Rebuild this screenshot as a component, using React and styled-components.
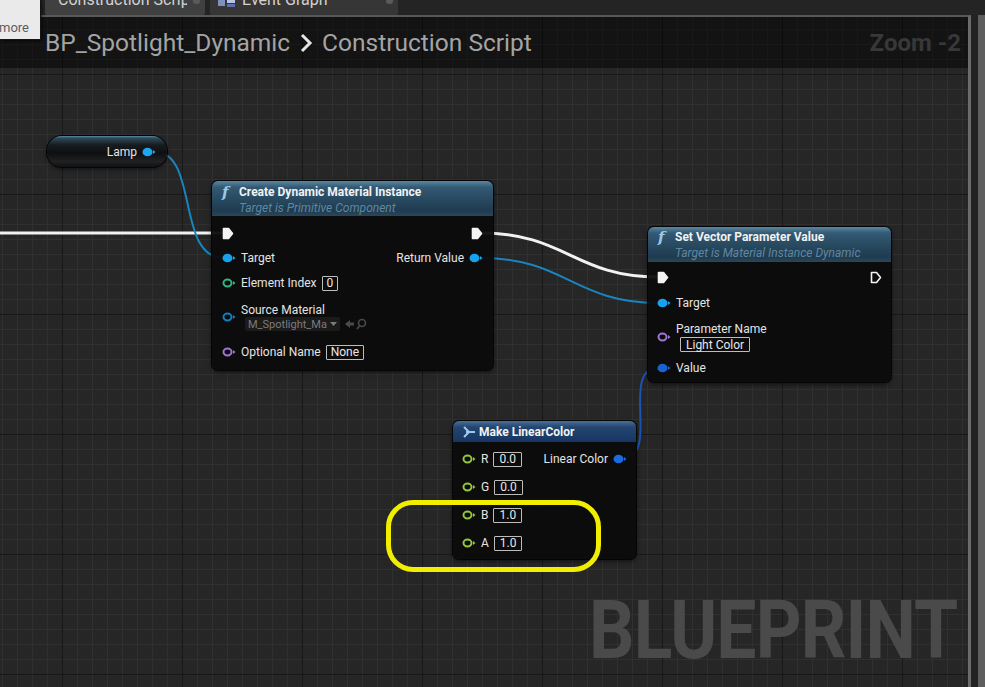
import styled, { createGlobalStyle } from 'styled-components'

// canvas starts below the tab strip and the panel border
const OY = 17

const GlobalStyle = createGlobalStyle`
  html, body { margin: 0; padding: 0; background: #1e1e1e; }
  body { font-family: Roboto, "Liberation Sans", sans-serif; }
`

const Screen = styled.div`
  position: relative;
  width: 985px;
  height: 687px;
  display: flex;
  flex-direction: column;
  overflow: hidden;
  background: #232323;
`
const TabBar = styled.div`
  height: 15px;
  flex-shrink: 0;
  display: flex;
  gap: 5px;
  padding-left: 45px;
  background: #242424;
`
const Tab = styled.div`
  width: ${p => p.$w}px;
  box-sizing: border-box;
  display: flex;
  align-items: flex-start;
  gap: 6px;
  padding-left: ${p => p.$pl}px;
  overflow: hidden;
  background: ${p => (p.$active ? '#404040' : '#363636')};
  border-radius: 0 0 2px 2px;
`
const TabLabel = styled.span`
  flex: 1;
  min-width: 0;
  overflow: hidden;
  margin-top: -8px;
  font-size: 16px;
  line-height: 16px;
  color: #d2d2d2;
  white-space: nowrap;
`
const TabClose = styled.span`
  width: 7px;
  height: 4px;
  margin-right: 5px;
  border-radius: 0 0 3px 3px;
  background: #5a5a5a;
`
const Popup = styled.div`
  position: absolute;
  left: 0;
  top: 0;
  z-index: 5;
  width: 41px;
  height: 40px;
  box-sizing: border-box;
  display: flex;
  align-items: center;
  justify-content: flex-end;
  padding: 16px 11px 0 0;
  background: #eaeaea;
  border-right: 1px solid #151515;
  border-bottom: 1px solid #151515;
  box-shadow: 1px 1px 3px rgba(0, 0, 0, 0.6);
  font-size: 13px;
  color: #5e5e5e;
`
const Body = styled.div`
  flex: 1;
  display: flex;
`
const GraphPanel = styled.div`
  width: 971px;
  box-sizing: border-box;
  display: flex;
  flex-direction: column;
  border-top: 2px solid #585858;
  border-right: 3px solid #6b6b6b;
`
const SideStrip = styled.div`
  flex: 1;
  background: linear-gradient(90deg, #222 0 7px, #5e5e5e 7px);
`
const Canvas = styled.div`
  position: relative;
  flex: 1;
  overflow: hidden;
  background-color: #262626;
  background-image:
    linear-gradient(90deg, #181818 1px, transparent 1px),
    linear-gradient(180deg, #181818 1px, transparent 1px),
    linear-gradient(90deg, #303030 1px, transparent 1px),
    linear-gradient(180deg, #303030 1px, transparent 1px);
  background-size: 120px 120px, 120px 120px, 15px 15px, 15px 15px;
  background-position: 62px 57px, 62px 57px, 2px 12px, 2px 12px;
`
const GraphHeader = styled.div`
  position: absolute;
  left: 0;
  top: 0;
  right: 0;
  height: 51px;
  z-index: 3;
  display: flex;
  align-items: center;
  justify-content: space-between;
  padding: 0 7px 0 45px;
  background: rgba(0, 0, 0, 0.5);
`
const Crumbs = styled.div`
  display: flex;
  align-items: center;
  gap: 9px;
  font-size: 24.5px;
  color: #a4a4a4;
`
const ZoomLabel = styled.div`
  font-size: 24px;
  font-weight: 700;
  color: #383838;
`
const Watermark = styled.div`
  position: absolute;
  left: 589px;
  top: 572px;
  font-size: 82px;
  line-height: 82px;
  font-weight: 700;
  color: #4a4a4a;
  transform: scaleX(0.87);
  transform-origin: left top;
  letter-spacing: -1px;
`
const Wires = styled.svg`
  position: absolute;
  left: 0;
  top: 0;
  z-index: 1;
`
const Highlight = styled.div`
  position: absolute;
  z-index: 4;
  left: 386px;
  top: ${500 - OY}px;
  width: 215px;
  height: 72px;
  box-sizing: border-box;
  border: 5px solid #f2ee00;
  border-radius: 27px;
`
const Node = styled.div`
  position: absolute;
  z-index: 2;
  left: ${p => p.$x}px;
  top: ${p => p.$y - OY}px;
  width: ${p => p.$w}px;
  height: ${p => p.$h}px;
  display: flex;
  flex-direction: column;
  overflow: hidden;
  border-radius: 6px;
  background: rgba(11, 11, 11, 0.95);
  box-shadow: 0 0 0 1px #050505, 0 2px 5px rgba(0, 0, 0, 0.6);
`
const NodeHeader = styled.div`
  height: ${p => p.$h}px;
  flex-shrink: 0;
  box-sizing: border-box;
  display: flex;
  align-items: flex-start;
  gap: ${p => (p.$kind === 'pure' ? 3 : 5)}px;
  padding: ${p => p.$pt}px 0 0 10px;
  background: ${p =>
    p.$kind === 'pure'
      ? 'linear-gradient(180deg, #4a6f98 0%, #23456f 30%, #173563 100%)'
      : 'linear-gradient(180deg, #5a87a3 0%, #335973 18%, #27485f 55%, #1f3b50 85%, #2a4658 100%)'};
`
const HeaderText = styled.div`
  display: flex;
  flex-direction: column;
`
const Title = styled.span`
  font-size: 12px;
  line-height: 16px;
  font-weight: 700;
  color: #f2f2f2;
  white-space: nowrap;
`
const Subtitle = styled.span`
  font-size: 12px;
  line-height: 16px;
  font-style: italic;
  color: #5f87a0;
  white-space: nowrap;
`
const FuncIcon = styled.span`
  width: 12px;
  font-family: "DejaVu Serif", serif;
  font-style: italic;
  font-weight: 700;
  font-size: 15px;
  line-height: 16px;
  color: #9cc8ea;
`
const NodeBody = styled.div`
  flex: 1;
  display: flex;
  flex-direction: column;
  padding: ${p => p.$pad};
`
const PinRow = styled.div`
  height: ${p => p.$h}px;
  display: flex;
  align-items: center;
  justify-content: space-between;
`
const PinSide = styled.div`
  display: flex;
  align-items: center;
  gap: 5px;
`
const PinLabel = styled.span`
  font-size: 12px;
  line-height: 14px;
  color: #e4e4e4;
  white-space: nowrap;
`
const Stack = styled.div`
  display: flex;
  flex-direction: column;
  gap: ${p => p.$gap || 0}px;
  align-items: flex-start;
`
const ValueBox = styled.span`
  display: inline-flex;
  align-items: center;
  height: 15px;
  box-sizing: border-box;
  padding: 0 ${p => p.$px || 5}px;
  border: 1px solid #bdbdbd;
  border-radius: 1px;
  font-size: 12px;
  color: #e8e8e8;
  margin-left: ${p => p.$ml || 0}px;
`
const AssetPicker = styled.div`
  display: flex;
  align-items: center;
  gap: 4px;
  padding-left: 4px;
`
const AssetCombo = styled.span`
  display: inline-flex;
  align-items: center;
  gap: 3px;
  height: 14px;
  padding: 0 3px;
  background: #1b1b1b;
  border-radius: 2px;
  font-size: 11px;
  color: #7c7c7c;
`
const VarNode = styled.div`
  position: absolute;
  z-index: 2;
  left: 47px;
  top: ${136 - OY}px;
  width: 120px;
  height: 31px;
  box-sizing: border-box;
  display: flex;
  align-items: center;
  justify-content: flex-end;
  gap: 5px;
  padding-right: 11px;
  border-radius: 15px;
  background: linear-gradient(180deg, #5c8ea6 0px, #2e4b5a 2px, #171c1f 9px, #0e0f10 55%, #1f2123 82%, #101112 100%);
  box-shadow: 0 0 0 1px #050505, 0 2px 4px rgba(0, 0, 0, 0.6);
`

function ExecPin({ filled }) {
  return (
    <svg width="12" height="13" viewBox="0 0 12 13">
      <path
        d="M1.5 1.5 H6.5 L10.5 6.5 L6.5 11.5 H1.5 Z"
        fill={filled ? '#f4f4f4' : 'none'}
        stroke="#f4f4f4"
        strokeWidth="1.6"
        strokeLinejoin="round"
      />
    </svg>
  )
}

function DataPin({ color, filled }) {
  return (
    <svg width="14" height="10" viewBox="0 0 14 10">
      <ellipse
        cx="5.5"
        cy="5"
        rx={filled ? 5 : 4}
        ry={filled ? 4.3 : 3.4}
        fill={filled ? color : 'none'}
        stroke={color}
        strokeWidth={filled ? 0 : 2}
      />
      <path d="M11 3 L13.5 5 L11 7 Z" fill={color} />
    </svg>
  )
}

function Chevron() {
  return (
    <svg width="14" height="22" viewBox="0 0 14 22">
      <path d="M3 3 L11 11 L3 19" fill="none" stroke="#e6e6e6" strokeWidth="3" />
    </svg>
  )
}

function MakeIcon() {
  return (
    <svg width="13" height="16" viewBox="0 0 13 16">
      <path d="M1 3 L6 8 M1 13 L6 8 M3 8 H12" fill="none" stroke="#9cc8f0" strokeWidth="2" />
    </svg>
  )
}

function GraphIcon() {
  return (
    <svg width="18" height="8" viewBox="0 0 18 8">
      <rect x="0" y="0" width="7" height="6" fill="#7f8fc0" />
      <rect x="9" y="0" width="8" height="3" fill="#b9c3e6" />
      <rect x="9" y="4" width="8" height="3" fill="#5f6fa8" />
    </svg>
  )
}

function PickerIcons() {
  return (
    <svg width="26" height="12" viewBox="0 0 26 12">
      <path d="M1 6 L6 2 V4.5 H10 V7.5 H6 V10 Z" fill="#4a4a4a" />
      <circle cx="18" cy="5" r="3.5" fill="none" stroke="#4a4a4a" strokeWidth="1.6" />
      <path d="M15.5 8 L13 11" stroke="#4a4a4a" strokeWidth="1.8" />
    </svg>
  )
}

const y = v => v - OY

export default function App() {
  return (
    <>
      <GlobalStyle />
      <Screen>
        <Popup>more</Popup>
        <TabBar>
          <Tab $w={160} $pl={13} $active>
            <TabLabel>Construction Script</TabLabel>
            <TabClose />
          </Tab>
          <Tab $w={188} $pl={8}>
            <GraphIcon />
            <TabLabel>Event Graph</TabLabel>
            <TabClose />
          </Tab>
        </TabBar>
        <Body>
          <GraphPanel>
            <Canvas>
              <GraphHeader>
                <Crumbs>
                  <span>BP_Spotlight_Dynamic</span>
                  <Chevron />
                  <span>Construction Script</span>
                </Crumbs>
                <ZoomLabel>Zoom -2</ZoomLabel>
              </GraphHeader>

              <Watermark>BLUEPRINT</Watermark>

              <Wires width="968" height="670">
                <path d={`M0 ${y(233)} H224`} stroke="#f2f2f2" strokeWidth="3" fill="none" />
                <path
                  d={`M153 ${y(151)} C200 ${y(151)}, 175 ${y(258)}, 224 ${y(258)}`}
                  stroke="#1a84bf"
                  strokeWidth="2"
                  fill="none"
                />
                <path
                  d={`M481 ${y(233)} C565 ${y(233)}, 575 ${y(277)}, 658 ${y(277)}`}
                  stroke="#f2f2f2"
                  strokeWidth="3"
                  fill="none"
                />
                <path
                  d={`M481 ${y(258)} C565 ${y(258)}, 575 ${y(303)}, 658 ${y(303)}`}
                  stroke="#1a84bf"
                  strokeWidth="2"
                  fill="none"
                />
                <path
                  d={`M624 ${y(457)} C660 ${y(457)}, 620 ${y(368)}, 658 ${y(368)}`}
                  stroke="#1a55b5"
                  strokeWidth="2"
                  fill="none"
                />
              </Wires>

              <VarNode>
                <PinLabel>Lamp</PinLabel>
                <DataPin color="#1ea6f2" filled />
              </VarNode>

              <Node $x={212} $y={181} $w={281} $h={189}>
                <NodeHeader $h={35} $pt={3}>
                  <FuncIcon>f</FuncIcon>
                  <HeaderText>
                    <Title>Create Dynamic Material Instance</Title>
                    <Subtitle>Target is Primitive Component</Subtitle>
                  </HeaderText>
                </NodeHeader>
                <NodeBody $pad="5px 10px 5px 10px">
                  <PinRow $h={24}>
                    <ExecPin filled />
                    <ExecPin filled />
                  </PinRow>
                  <PinRow $h={26}>
                    <PinSide>
                      <DataPin color="#18a2ee" filled />
                      <PinLabel>Target</PinLabel>
                    </PinSide>
                    <PinSide>
                      <PinLabel>Return Value</PinLabel>
                      <DataPin color="#18a2ee" filled />
                    </PinSide>
                  </PinRow>
                  <PinRow $h={24}>
                    <PinSide>
                      <DataPin color="#2fb784" />
                      <PinLabel>Element Index</PinLabel>
                      <ValueBox $px={4}>0</ValueBox>
                    </PinSide>
                  </PinRow>
                  <PinRow $h={44}>
                    <PinSide>
                      <DataPin color="#137fbf" />
                      <Stack>
                        <PinLabel>Source Material</PinLabel>
                        <AssetPicker>
                          <AssetCombo>
                            M_Spotlight_Ma
                            <svg width="7" height="5" viewBox="0 0 7 5">
                              <path d="M0 0 H7 L3.5 4 Z" fill="#7c7c7c" />
                            </svg>
                          </AssetCombo>
                          <PickerIcons />
                        </AssetPicker>
                      </Stack>
                    </PinSide>
                  </PinRow>
                  <PinRow $h={26}>
                    <PinSide>
                      <DataPin color="#a274d6" />
                      <PinLabel>Optional Name</PinLabel>
                      <ValueBox $px={4}>None</ValueBox>
                    </PinSide>
                  </PinRow>
                </NodeBody>
              </Node>

              <Node $x={648} $y={227} $w={243} $h={155}>
                <NodeHeader $h={35} $pt={2}>
                  <FuncIcon>f</FuncIcon>
                  <HeaderText>
                    <Title>Set Vector Parameter Value</Title>
                    <Subtitle>Target is Material Instance Dynamic</Subtitle>
                  </HeaderText>
                </NodeHeader>
                <NodeBody $pad="5px 9px 1px 9px">
                  <PinRow $h={20}>
                    <ExecPin filled />
                    <ExecPin />
                  </PinRow>
                  <PinRow $h={32}>
                    <PinSide>
                      <DataPin color="#18a2ee" filled />
                      <PinLabel>Target</PinLabel>
                    </PinSide>
                  </PinRow>
                  <PinRow $h={36}>
                    <PinSide>
                      <DataPin color="#a274d6" />
                      <Stack $gap={1}>
                        <PinLabel>Parameter Name</PinLabel>
                        <ValueBox $ml={4}>Light Color</ValueBox>
                      </Stack>
                    </PinSide>
                  </PinRow>
                  <PinRow $h={26}>
                    <PinSide>
                      <DataPin color="#1b62d0" filled />
                      <PinLabel>Value</PinLabel>
                    </PinSide>
                  </PinRow>
                </NodeBody>
              </Node>

              <Node $x={453} $y={421} $w={183} $h={138}>
                <NodeHeader $h={21} $pt={3} $kind="pure">
                  <MakeIcon />
                  <Title>Make LinearColor</Title>
                </NodeHeader>
                <NodeBody $pad="3px 9px 2px 9px">
                  {[
                    ['R', '0.0'],
                    ['G', '0.0'],
                    ['B', '1.0'],
                    ['A', '1.0'],
                  ].map(([name, val], i) => (
                    <PinRow $h={28} key={name}>
                      <PinSide>
                        <DataPin color="#94c53c" />
                        <PinLabel>{name}</PinLabel>
                        <ValueBox>{val}</ValueBox>
                      </PinSide>
                      {i === 0 && (
                        <PinSide>
                          <PinLabel>Linear Color</PinLabel>
                          <DataPin color="#1a6ae2" filled />
                        </PinSide>
                      )}
                    </PinRow>
                  ))}
                </NodeBody>
              </Node>

              <Highlight />
            </Canvas>
          </GraphPanel>
          <SideStrip />
        </Body>
      </Screen>
    </>
  )
}
